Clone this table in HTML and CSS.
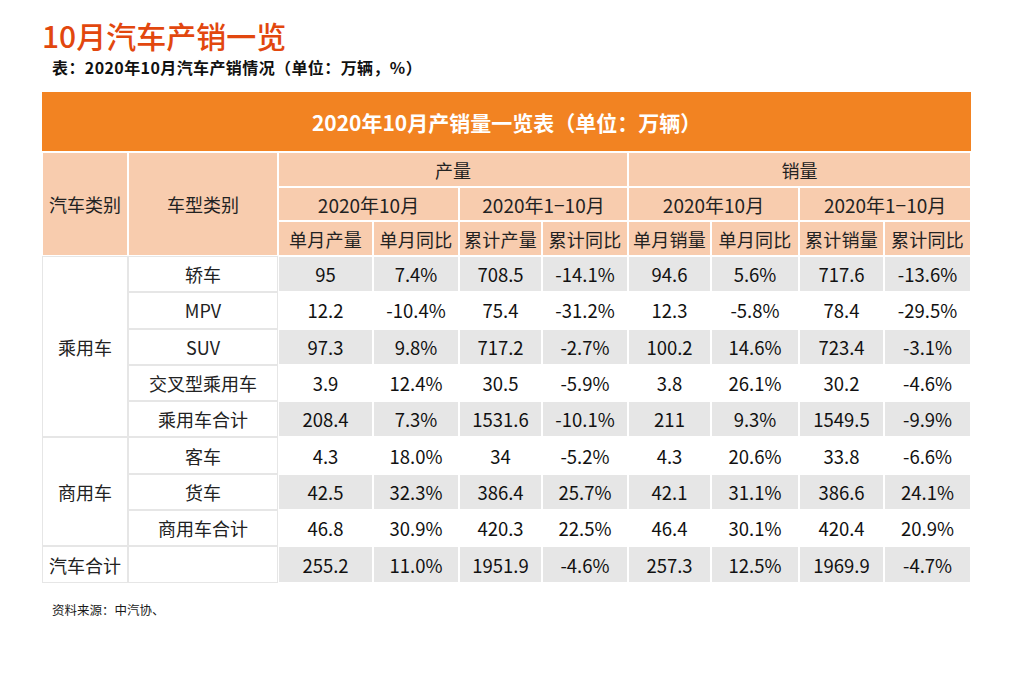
FILE: index.html
```html
<!DOCTYPE html>
<html lang="zh-CN">
<head>
<meta charset="utf-8">
<title>10月汽车产销一览</title>
<link rel="stylesheet" href="styles.css">
</head>
<body>
<div class="page">
  <h1 class="title">10月汽车产销一览</h1>
  <p class="subtitle">表：2020年10月汽车产销情况（单位：万辆，%）</p>
  <table class="sheet">
    <colgroup>
      <col class="c1"><col class="c2"><col class="c3"><col class="c4"><col class="c5">
      <col class="c6"><col class="c7"><col class="c8"><col class="c9"><col class="c10">
    </colgroup>
    <thead>
      <tr class="band"><th colspan="10">2020年10月产销量一览表（单位：万辆）</th></tr>
      <tr class="h1">
        <th rowspan="3" class="hd">汽车类别</th>
        <th rowspan="3" class="hd">车型类别</th>
        <th colspan="4" class="hd">产量</th>
        <th colspan="4" class="hd">销量</th>
      </tr>
      <tr class="h2">
        <th colspan="2" class="hd per">2020年10月</th>
        <th colspan="2" class="hd per">2020年1−10月</th>
        <th colspan="2" class="hd per">2020年10月</th>
        <th colspan="2" class="hd per">2020年1−10月</th>
      </tr>
      <tr class="h3">
        <th class="hd lab">单月产量</th><th class="hd lab">单月同比</th>
        <th class="hd lab">累计产量</th><th class="hd lab">累计同比</th>
        <th class="hd lab">单月销量</th><th class="hd lab">单月同比</th>
        <th class="hd lab">累计销量</th><th class="hd lab">累计同比</th>
      </tr>
    </thead>
    <tbody>
      <tr class="shade">
        <td rowspan="5" class="side">乘用车</td>
        <td class="side">轿车</td>
        <td>95</td><td>7.4%</td><td>708.5</td><td>-14.1%</td><td>94.6</td><td>5.6%</td><td>717.6</td><td>-13.6%</td>
      </tr>
      <tr>
        <td class="side">MPV</td>
        <td>12.2</td><td>-10.4%</td><td>75.4</td><td>-31.2%</td><td>12.3</td><td>-5.8%</td><td>78.4</td><td>-29.5%</td>
      </tr>
      <tr class="shade">
        <td class="side">SUV</td>
        <td>97.3</td><td>9.8%</td><td>717.2</td><td>-2.7%</td><td>100.2</td><td>14.6%</td><td>723.4</td><td>-3.1%</td>
      </tr>
      <tr>
        <td class="side">交叉型乘用车</td>
        <td>3.9</td><td>12.4%</td><td>30.5</td><td>-5.9%</td><td>3.8</td><td>26.1%</td><td>30.2</td><td>-4.6%</td>
      </tr>
      <tr class="shade">
        <td class="side">乘用车合计</td>
        <td>208.4</td><td>7.3%</td><td>1531.6</td><td>-10.1%</td><td>211</td><td>9.3%</td><td>1549.5</td><td>-9.9%</td>
      </tr>
      <tr>
        <td rowspan="3" class="side">商用车</td>
        <td class="side">客车</td>
        <td>4.3</td><td>18.0%</td><td>34</td><td>-5.2%</td><td>4.3</td><td>20.6%</td><td>33.8</td><td>-6.6%</td>
      </tr>
      <tr class="shade">
        <td class="side">货车</td>
        <td>42.5</td><td>32.3%</td><td>386.4</td><td>25.7%</td><td>42.1</td><td>31.1%</td><td>386.6</td><td>24.1%</td>
      </tr>
      <tr>
        <td class="side">商用车合计</td>
        <td>46.8</td><td>30.9%</td><td>420.3</td><td>22.5%</td><td>46.4</td><td>30.1%</td><td>420.4</td><td>20.9%</td>
      </tr>
      <tr class="shade">
        <td class="side">汽车合计</td>
        <td class="side"></td>
        <td>255.2</td><td>11.0%</td><td>1951.9</td><td>-4.6%</td><td>257.3</td><td>12.5%</td><td>1969.9</td><td>-4.7%</td>
      </tr>
    </tbody>
  </table>
  <p class="source">资料来源：中汽协、</p>
</div>
</body>
</html>
```

FILE: styles.css
```css
* { box-sizing: border-box; }

html, body {
  margin: 0;
  padding: 0;
  background: #ffffff;
}

body {
  font-family: "Noto Sans CJK SC", "Noto Sans", "Liberation Sans", sans-serif;
  color: #1a1a1a;
}

.page {
  width: 1020px;
  height: 680px;
  padding: 15px 0 0 42px;
}

.title {
  margin: 0;
  font-size: 30px;
  line-height: 40px;
  font-weight: 500;
  color: #e2470e;
  letter-spacing: 0;
}

.subtitle {
  margin: 0 0 0 10px;
  font-size: 16px;
  line-height: 24px;
  font-weight: 700;
  color: #111111;
  letter-spacing: 0.4px;
}

.sheet {
  margin-top: 13px;
  border-collapse: separate;
  border-spacing: 0;
  table-layout: fixed;
  width: 929px;
}

.c1 { width: 86px; }
.c2 { width: 150px; }
.c3 { width: 95px; }
.c4 { width: 86px; }
.c5 { width: 83px; }
.c6 { width: 86px; }
.c7 { width: 83px; }
.c8 { width: 88px; }
.c9 { width: 85px; }
.c10 { width: 87px; }

.sheet th,
.sheet td {
  padding: 0;
  text-align: center;
  vertical-align: middle;
  white-space: nowrap;
  font-weight: 400;
}

.band th {
  height: 60px;
  background: #f28322;
  color: #ffffff;
  font-size: 21px;
  font-weight: 700;
  border-bottom: 1px solid #ffffff;
  padding-top: 1px;
}

.hd {
  background: #f8ccae;
  border: 1px solid #ffffff;
  font-size: 18px;
  color: #222222;
}

.hd.per {
  font-size: 19px;
}

.h1 { height: 35px; }
.h2 { height: 34px; }
.h3 { height: 35px; }

.lab {
  vertical-align: bottom;
  padding-bottom: 1px;
  line-height: 24px;
  letter-spacing: 0.3px;
}

.sheet tbody tr { height: 36.3px; }

.sheet td {
  font-size: 18.5px;
  color: #111111;
  border: 1px solid #ffffff;
  background: #ffffff;
}

.sheet tr.shade td {
  background: #e6e6e6;
}

.sheet td.side,
.sheet tr.shade td.side {
  background: #ffffff;
  border: 1px solid #e6e6e6;
  color: #222222;
  font-size: 18px;
}

.source {
  margin: 18px 0 0 10px;
  font-size: 12.5px;
  line-height: 18px;
  color: #1a1a1a;
}
```
